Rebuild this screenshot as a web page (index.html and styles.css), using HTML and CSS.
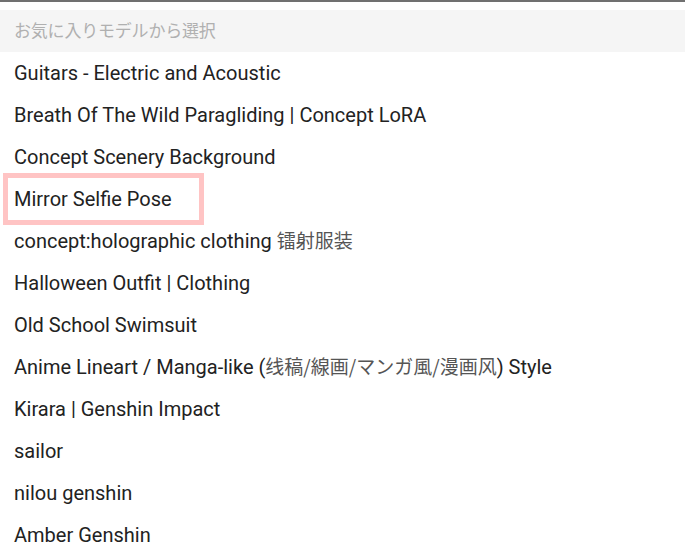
FILE: index.html
```html
<!DOCTYPE html>
<html lang="ja">
<head>
<meta charset="utf-8">
<link rel="stylesheet" href="styles.css">
</head>
<body>
<div class="topbar"></div>
<div class="panel">
  <div class="search">お気に入りモデルから選択</div>
  <ul class="list">
    <li class="item"><span class="label">Guitars - Electric and Acoustic</span></li>
    <li class="item"><span class="label">Breath Of The Wild Paragliding | Concept LoRA</span></li>
    <li class="item"><span class="label">Concept Scenery Background</span></li>
    <li class="item"><span class="label selected">Mirror Selfie Pose</span></li>
    <li class="item"><span class="label">concept:holographic clothing <span class="cjk">镭射服装</span></span></li>
    <li class="item"><span class="label">Halloween Outfit | Clothing</span></li>
    <li class="item"><span class="label">Old School Swimsuit</span></li>
    <li class="item"><span class="label">Anime Lineart / Manga-like (<span class="cjk">线稿/線画/マンガ風/漫画风</span>) Style</span></li>
    <li class="item"><span class="label">Kirara | Genshin Impact</span></li>
    <li class="item"><span class="label">sailor</span></li>
    <li class="item"><span class="label">nilou genshin</span></li>
    <li class="item"><span class="label">Amber Genshin</span></li>
  </ul>
</div>
</body>
</html>
```
FILE: styles.css
```css
html, body {
  margin: 0;
  padding: 0;
  background: #ffffff;
  overflow: hidden;
}
body {
  font-family: Roboto, "Noto Sans CJK JP", sans-serif;
  font-size: 20px;
  color: #222222;
}
.topbar {
  height: 2px;
  background: #707070;
}
.panel {
  padding-top: 8px;
}
.search {
  box-sizing: border-box;
  height: 42px;
  display: flex;
  align-items: center;
  padding-bottom: 3px;
  background: #f5f5f5;
  padding-left: 14px;
  color: #b0b0b0;
  font-family: "Noto Sans CJK JP", sans-serif;
  font-size: 17px;
  letter-spacing: -0.2px;
}
.list {
  list-style: none;
  margin: 0;
  padding: 0;
}
.item {
  height: 42px;
  display: flex;
  align-items: center;
  padding-left: 14px;
  white-space: nowrap;
}
.label {
  line-height: 1.2;
}
.cjk {
  font-family: "Noto Sans CJK SC", sans-serif;
  font-size: 19px;
  line-height: 1;
  color: #555;
}
.selected {
  display: flex;
  align-items: center;
  box-sizing: border-box;
  width: 191px;
  height: 42px;
  margin-left: -6px;
  padding-left: 6px;
  outline: 5px solid #ffc4c4;
}
```
